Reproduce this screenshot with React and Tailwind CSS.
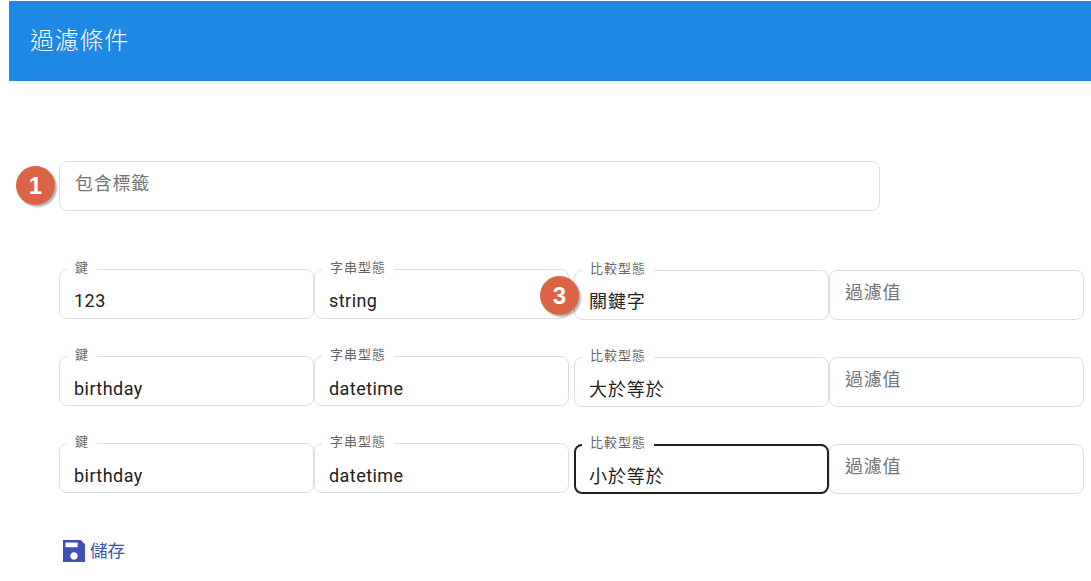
import React from 'react';

const FONT = 'font-["Roboto","Noto_Sans_CJK_TC",sans-serif]';

const rows = [
  { key: '123', type: 'string', compare: '關鍵字', badge: '3' },
  { key: 'birthday', type: 'datetime', compare: '大於等於', lower: true },
  { key: 'birthday', type: 'datetime', compare: '小於等於', lower: true, focused: true },
];

const Badge = ({ children, className }) => (
  <span className={`absolute flex h-[39px] w-[39px] items-center justify-center rounded-full bg-[#dc6446] text-2xl font-bold text-white shadow-[2px_2px_2px_rgba(0,0,0,0.3)] font-["Liberation_Sans",sans-serif] ${className}`}>
    {children}
  </span>
);

const Field = ({ label, value, focused, lower, cjk, className = '' }) => (
  <div className={`relative h-[50px] rounded-lg ${focused ? 'border-2 border-[#212121]' : 'border border-[#dedede] p-px'} ${className}`}>
    <span className={`absolute bg-white px-2 text-[13px] leading-4 tracking-[1px] text-[#666666] ${focused ? 'left-[6px] top-[-11px]' : 'left-[7px] top-[-10px]'}`}>{label}</span>
    <div className={`px-[13px] text-lg leading-6 text-[#212121] ${lower ? 'pt-[19px]' : 'pt-[18px]'} ${cjk ? 'tracking-[0.9px]' : 'tracking-[0.45px]'}`}>{value}</div>
  </div>
);

const Placeholder = ({ text, className = '' }) => (
  <div className={`h-[50px] rounded-lg border border-[#dedede] pl-[15px] pt-[10px] text-lg leading-6 tracking-[0.75px] text-[#757575] ${className}`}>
    {text}
  </div>
);

const App = () => {
  return (
    <div className={`h-[581px] w-[1091px] overflow-hidden bg-white pl-[9px] pt-px ${FONT}`}>
      <header className="flex h-20 items-center bg-[#1e88e5] pl-[21px]">
        <h1 className="text-2xl font-light tracking-[0.75px] text-white">過濾條件</h1>
      </header>

      <div className="pl-[50px] pt-20">
        <div className="relative w-[821px]">
          <Placeholder text="包含標籤" />
          <Badge className="left-[-43px] top-[5px]">1</Badge>
        </div>

        <div className="mt-[59px] flex flex-col gap-[37px]">
          {rows.map((row, i) => (
            <div key={i} className="relative flex w-[1025px]">
              <Field label="鍵" value={row.key} lower={row.lower} className="-mt-px w-[255px]" />
              <Field label="字串型態" value={row.type} lower={row.lower} className="-mt-px w-[255px]" />
              <Field label="比較型態" value={row.compare} lower={row.lower} cjk focused={row.focused} className="ml-[5px] w-[255px]" />
              <Placeholder text="過濾值" className="w-[255px]" />
              {row.badge && <Badge className="left-[481px] top-[6px]">{row.badge}</Badge>}
            </div>
          ))}
        </div>

        <button className="mt-[45px] flex items-center gap-[5px] pl-1 text-[17.5px] leading-6 text-[#3f51b5]">
          <svg viewBox="3 3 18 18" className="h-[22px] w-[22px] fill-[#3f51b5]">
            <path fillRule="evenodd" d="M17.5 3H3v18h18V6.5zM12 19c-1.66 0-3-1.34-3-3s1.34-3 3-3 3 1.34 3 3-1.34 3-3 3zM15 9H5V5h10z" />
          </svg>
          儲存
        </button>
      </div>
    </div>
  );
};

export default App;
